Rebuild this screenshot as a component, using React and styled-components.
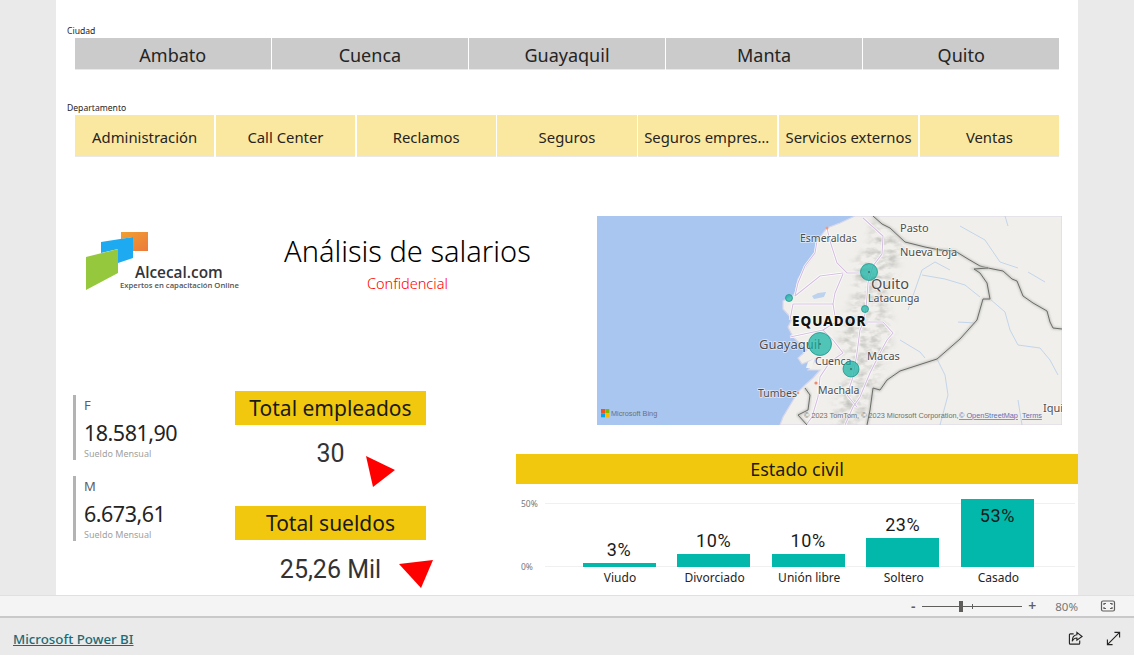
import React from 'react'
import styled, { createGlobalStyle } from 'styled-components'

const UI_FONT = `"Noto Sans", "Open Sans", "Liberation Sans", sans-serif`
const NUM_FONT = `Roboto, "Liberation Sans", sans-serif`

const GlobalStyle = createGlobalStyle`
  html, body {
    margin: 0;
    height: 655px;
    overflow: hidden;
    background: #eaeaea;
    font-family: ${UI_FONT};
  }
`

const Page = styled.div`
  width: 1134px;
  height: 655px;
  display: flex;
  flex-direction: column;
`

const Canvas = styled.main`
  width: 1022px;
  height: 595px;
  margin-left: 56px;
  background: #fff;
  padding-top: 25px;
  box-sizing: border-box;
  overflow: hidden;
  flex: none;
`

const SlicerLabel = styled.div`
  margin-left: 11px;
  height: 13px;
  font-size: 8.6px;
  line-height: 12px;
  color: #252423;
`

const SlicerRow = styled.div`
  display: grid;
  grid-template-columns: repeat(${props => props.$count}, minmax(0, 1fr));
  gap: 1.5px;
  margin: 0 19px 32px;
`

const Tile = styled.div`
  height: ${props => props.$height}px;
  line-height: ${props => props.$height + 2}px;
  background: ${props => props.$color};
  border-bottom: 1px solid #e9e9e9;
  box-sizing: border-box;
  padding: 0 6px;
  text-align: center;
  font-size: ${props => props.$size}px;
  color: #252423;
  white-space: nowrap;
  overflow: hidden;
  text-overflow: ellipsis;
`

const Lower = styled.div`
  display: grid;
  grid-template-columns: 460px 562px;
  margin-top: 59px;
`

const LeftColumn = styled.div`
  display: flex;
  flex-direction: column;
`

const BrandRow = styled.div`
  height: 175px;
  display: flex;
  align-items: flex-start;
`

const Logo = styled.svg`
  width: 160px;
  height: 70px;
  margin: 12px 0 0 26px;
  flex: none;
`

const LogoName = styled.text`
  font-family: "Open Sans", ${UI_FONT};
  font-size: 15.4px;
  font-weight: 600;
  fill: #33353a;
`

const LogoTag = styled.text`
  font-family: "Open Sans", ${UI_FONT};
  font-size: 7.7px;
  font-weight: 600;
  fill: #555;
`

const TitleBlock = styled.div`
  width: 270px;
  margin: 15px 0 0 42px;
  text-align: center;
`

const Title = styled.h1`
  margin: 0;
  font-size: 29px;
  line-height: 40px;
  font-weight: 300;
  color: #000;
  white-space: nowrap;
`

const Subtitle = styled.div`
  margin-top: 2px;
  font-size: 14.5px;
  font-weight: 300;
  line-height: 20px;
  color: #f00;
`

const StatsRow = styled.div`
  display: flex;
`

const CardColumn = styled.div`
  width: 179px;
  padding: 4px 0 0 17px;
  box-sizing: border-box;
  display: flex;
  flex-direction: column;
  gap: 16px;
`

const StatCard = styled.div`
  height: 65px;
  box-sizing: border-box;
  border-left: 3px solid #b3b3b3;
  padding-left: 8px;
`

const StatKey = styled.div`
  font-size: 13px;
  line-height: 20px;
  color: #605e5c;
`

const StatValue = styled.div`
  margin-top: 4px;
  font-size: 21.5px;
  line-height: 28px;
  letter-spacing: -0.5px;
  color: #252423;
`

const StatCaption = styled.div`
  margin-top: 1px;
  font-size: 9px;
  line-height: 12px;
  color: #a19f9d;
`

const KpiColumn = styled.div`
  width: 191px;
`

const Band = styled.div`
  height: ${props => props.$height}px;
  line-height: ${props => props.$height}px;
  background: #f2c80f;
  text-align: center;
  font-size: ${props => props.$size}px;
  color: #1a1a1a;
`

const KpiValue = styled.div`
  position: relative;
  height: 81px;
  padding-top: ${props => props.$top}px;
  box-sizing: border-box;
  text-align: center;
  font-family: ${NUM_FONT};
  font-size: 25px;
  line-height: 30px;
  color: #333;
`

const Arrow = styled.svg`
  position: absolute;
  left: ${props => props.$left}px;
  top: ${props => props.$top}px;
  width: 36px;
  height: 32px;
`

const RightColumn = styled.div`
  display: flex;
  flex-direction: column;
`

const MapFrame = styled.svg`
  display: block;
  width: 465px;
  height: 209px;
  margin-left: 81px;
`

const Place = styled.text`
  font-family: ${UI_FONT};
  font-size: ${props => props.$size}px;
  font-weight: ${props => (props.$bold ? 800 : 400)};
  letter-spacing: ${props => (props.$bold ? 1 : 0)}px;
  fill: ${props => (props.$bold ? '#111' : '#4e4e4e')};
  paint-order: stroke;
  stroke: ${props => (props.$bold ? 'rgba(255,255,255,.7)' : 'rgba(255,255,255,.6)')};
  stroke-width: 1.6px;
`

const Attribution = styled.text`
  font-family: "Liberation Sans", sans-serif;
  font-size: 7.3px;
  fill: ${props => (props.$link ? '#5a72b8' : '#6f6f6f')};
  text-decoration: ${props => (props.$link ? 'underline' : 'none')};
`

const ChartBox = styled.section`
  margin-top: 29px;
`

const Plot = styled.div`
  position: relative;
  height: 111px;
`

const GridLine = styled.div`
  position: absolute;
  left: 29px;
  right: 3px;
  top: ${props => props.$top}px;
  height: 1px;
  background: #f0f0f0;
`

const AxisTick = styled.span`
  position: absolute;
  left: 5px;
  top: ${props => props.$top}px;
  font-size: 8.5px;
  line-height: 12px;
  color: #777;
`

const Bars = styled.div`
  position: relative;
  display: grid;
  grid-template-columns: repeat(5, 73px);
  column-gap: 21.6px;
  margin-left: 66.5px;
`

const BarSlot = styled.div`
  height: 83px;
  display: flex;
  flex-direction: column;
  justify-content: flex-end;
  align-items: center;
  position: relative;
`

const BarValue = styled.div`
  margin-bottom: 2px;
  font-family: ${NUM_FONT};
  font-size: 18px;
  line-height: 22px;
  letter-spacing: 0.6px;
  color: #1a1a1a;
  ${props => props.$inside && `
    position: absolute;
    top: 21px;
    z-index: 1;
  `}
`

const Bar = styled.div`
  width: 100%;
  background: #01b8aa;
`

const BarName = styled.div`
  margin-top: 2px;
  padding-left: 2px;
  font-size: 12px;
  line-height: 18px;
  text-align: center;
  color: #252423;
  white-space: nowrap;
`

const StatusBar = styled.div`
  height: 23px;
  box-sizing: border-box;
  border-top: 1px solid #e0e0e0;
  border-bottom: 2px solid #c9c9c9;
  background: #f4f4f4;
  display: flex;
  align-items: center;
  justify-content: flex-end;
  color: #605e5c;
`

const ZoomSign = styled.span`
  width: 10px;
  font-size: 14px;
  font-weight: 600;
  line-height: 14px;
  text-align: center;
`

const Slider = styled.div`
  position: relative;
  width: 100px;
  height: 1px;
  margin: 0 5px 0 4px;
  background: #605e5c;
`

const SliderTick = styled.i`
  position: absolute;
  left: 50px;
  top: -2px;
  width: 1px;
  height: 5px;
  background: #605e5c;
`

const SliderThumb = styled.i`
  position: absolute;
  left: 37px;
  top: -5px;
  width: 4px;
  height: 11px;
  background: #605e5c;
`

const ZoomValue = styled.span`
  margin: 0 22px 0 18px;
  font-size: 11.5px;
  color: #767676;
`

const Footer = styled.footer`
  flex: 1;
  display: flex;
  align-items: center;
  padding: 4px 13px 0;
`

const BrandLink = styled.a`
  font-size: 13.3px;
  font-weight: 500;
  color: #1b6b75;
  text-decoration: underline;
`

const FooterIcons = styled.div`
  margin-left: auto;
  display: flex;
  align-items: center;
  gap: 23px;
`

const Icon = styled.svg`
  display: block;
  width: ${props => props.$size}px;
  height: ${props => props.$size}px;
  margin-right: ${props => props.$right || 0}px;
  fill: none;
  stroke: ${props => props.$color || '#252423'};
  stroke-width: 1.2;
`

const cities = ['Ambato', 'Cuenca', 'Guayaquil', 'Manta', 'Quito']
const departments = ['Administración', 'Call Center', 'Reclamos', 'Seguros', 'Seguros empresariales', 'Servicios externos', 'Ventas']
const civil = [
  { name: 'Viudo', value: 3 },
  { name: 'Divorciado', value: 10 },
  { name: 'Unión libre', value: 10 },
  { name: 'Soltero', value: 23 },
  { name: 'Casado', value: 53 },
]

const land = 'M855 216L840 223L827 228L817 241L815 254L805 268L798 279L795 294L783 301L783 309L792 319L788 327L793 337L807 350L798 358L802 364L817 358L808 370L820 370L813 378L805 385L798 392L783 417L780 425L1062 425L1062 216Z'
const roads = [
  'M827 228L830 241L837 263L847 273L867 273',
  'M817 241L815 253L805 266L798 283L795 296',
  'M795 296L820 276L843 273',
  'M843 274L835 293L833 304L793 304L790 320',
  'M863 218L883 236L882 254L873 266L868 283L866 309L863 323L860 330L857 353L853 377L847 395L857 407',
  'M863 322L883 322L893 333L887 340L880 353L870 373L860 397L853 407L845 425',
  'M790 337L823 330L833 340L843 353L830 362L820 377L818 397L812 417L806 425',
  'M833 304L836 322L823 330',
]
const rivers = [
  'M950 270L935 262L922 270L915 290L908 310',
  'M922 275L945 279L965 285L980 297',
  'M990 299L1005 312L1010 330L1018 345L1040 348L1050 360L1058 375',
  'M937 359L945 375L948 395L940 425',
  'M1005 216L1008 226M960 226L985 240L1000 262L1018 268',
  'M1028 272L1045 282M958 322L975 323',
  'M900 340L920 352L925 358',
  'M1018 400L1022 425',
]
const colombiaBorder = 'M873 216L882 224L890 228L905 242L925 247L940 250L955 251L968 259L980 266L988 268L1003 271L1012 279L1017 281L1023 296L1033 303L1047 311L1050 322L1053 328L1062 329'
const peruBorder = 'M988 268L974 269L980 273L987 283L990 299L983 299L977 320L960 339L937 359L900 371L887 380L880 390L873 388L870 410L867 425'
const peruCoastBorder = 'M805 388L810 395L808 410L798 415L807 425'
const bubbles = [
  { x: 869, y: 272, r: 8.5 },
  { x: 789, y: 298, r: 3.5 },
  { x: 865, y: 309, r: 3.5 },
  { x: 820, y: 344, r: 11.5 },
  { x: 851, y: 369, r: 8 },
]
const places = [
  { name: 'Esmeraldas', x: 800, y: 242, size: 10.5 },
  { name: 'Pasto', x: 900, y: 232, size: 11 },
  { name: 'Nueva Loja', x: 900, y: 256, size: 11 },
  { name: 'Quito', x: 871, y: 289, size: 14.5 },
  { name: 'Latacunga', x: 868, y: 302, size: 10.5 },
  { name: 'Guayaquil', x: 759, y: 349, size: 13 },
  { name: 'Cuenca', x: 815, y: 365, size: 10.5 },
  { name: 'Macas', x: 867, y: 360, size: 11 },
  { name: 'Machala', x: 818, y: 394, size: 10.5 },
  { name: 'Tumbes', x: 758, y: 397, size: 10.5 },
  { name: 'Iqui', x: 1043, y: 412, size: 11 },
]

function EcuadorMap() {
  return (
    <MapFrame viewBox="597 216 465 209">
      <defs>
        <filter id="ridge" x="-10%" y="-10%" width="120%" height="120%" colorInterpolationFilters="sRGB">
          <feGaussianBlur in="SourceAlpha" stdDeviation="5" result="mask" />
          <feTurbulence type="fractalNoise" baseFrequency="0.09 0.16" numOctaves="3" seed="4" />
          <feColorMatrix values="0 0 0 0 .68  0 0 0 0 .68  0 0 0 0 .66  1.5 0 0 0 -.58" />
          <feComposite in2="mask" operator="in" />
          <feGaussianBlur stdDeviation="0.5" />
        </filter>
        <filter id="soft"><feGaussianBlur stdDeviation="1.2" /></filter>
      </defs>
      <rect x="597" y="216" width="465" height="209" fill="#a9c6f1" />
      <path d={land} fill="#f0efeb" />
      <path d={land} fill="none" stroke="#d9d6e8" strokeWidth="1.2" />
      <path d="M808 362L815 358L812 368L806 368Z" fill="#f4f3f0" />
      <path d="M812 296L818 293L826 292L824 297L814 299Z" fill="#bcd2ee" />
      <path
        d="M870 216L905 245L897 262L886 300L892 335L880 375L868 405L860 425L832 425L838 392L850 362L838 342L845 318L855 296L855 262L872 240Z"
        fill="#fff"
        filter="url(#ridge)"
      />
      {rivers.map(d => <path key={d} d={d} fill="none" stroke="#bdd1ea" strokeWidth="0.9" />)}
      {roads.map(d => <path key={d} d={d} fill="none" stroke="#fff" strokeWidth="2.4" />)}
      {roads.map(d => <path key={d} d={d} fill="none" stroke="#d5bfe0" strokeWidth="1.1" />)}
      {[colombiaBorder, peruBorder, peruCoastBorder].map(d => (
        <g key={d} fill="none">
          <path d={d} stroke="#c4c4c0" strokeWidth="2.6" filter="url(#soft)" />
          <path d={d} stroke="#6c6c6a" strokeWidth="1" />
        </g>
      ))}
      <circle cx="827" cy="228" r="1.5" fill="#ef9a80" />
      <circle cx="816" cy="383" r="1.6" fill="#ef8a70" />
      <circle cx="798" cy="393" r="1.2" fill="#ef9a80" />
      {places.map(p => <Place key={p.name} x={p.x} y={p.y} $size={p.size}>{p.name}</Place>)}
      <Place x="792" y="326" $size={13.5} $bold>EQUADOR</Place>
      {bubbles.map(b => (
        <g key={b.x}>
          <circle cx={b.x} cy={b.y} r={b.r} fill="#14b3a4" fillOpacity=".72" stroke="#0e9184" strokeWidth=".7" />
          {b.r > 5 && <circle cx={b.x} cy={b.y} r="1" fill="#3f6f69" />}
        </g>
      ))}
      <rect x="601" y="409" width="4" height="4" fill="#f25022" />
      <rect x="605.3" y="409" width="4" height="4" fill="#7fba00" />
      <rect x="601" y="413.3" width="4" height="4" fill="#00a4ef" />
      <rect x="605.3" y="413.3" width="4" height="4" fill="#ffb900" />
      <Attribution x="611" y="416">Microsoft Bing</Attribution>
      <Attribution x="804" y="418">© 2023 TomTom, © 2023 Microsoft Corporation,</Attribution>
      <Attribution x="959" y="418" $link>© OpenStreetMap</Attribution>
      <Attribution x="1022" y="418" $link>Terms</Attribution>
    </MapFrame>
  )
}

function BrandLogo() {
  return (
    <Logo viewBox="82 228 160 70">
      <defs>
        <linearGradient id="orange" x1="0" y1="0" x2="1" y2="1">
          <stop offset="0" stopColor="#f0a030" />
          <stop offset="1" stopColor="#ec7a3c" />
        </linearGradient>
      </defs>
      <path d="M121 232H148V251L133 251V237L121 239Z" fill="url(#orange)" />
      <path d="M101 242L133 237V258L118 263V249L101 253Z" fill="#1eaaf1" />
      <path d="M86 257L118 249V273L86 290Z" fill="#95c83d" />
      <LogoName x="135" y="278">Alcecal.com</LogoName>
      <LogoTag x="120" y="288">Expertos en capacitación Online</LogoTag>
    </Logo>
  )
}

function Stat({ label, value }) {
  return (
    <StatCard>
      <StatKey>{label}</StatKey>
      <StatValue>{value}</StatValue>
      <StatCaption>Sueldo Mensual</StatCaption>
    </StatCard>
  )
}

function CivilChart() {
  return (
    <ChartBox>
      <Band $height={30} $size={18}>Estado civil</Band>
      <Plot>
        <GridLine $top={19} />
        <GridLine $top={82} />
        <AxisTick $top={14}>50%</AxisTick>
        <AxisTick $top={77}>0%</AxisTick>
        <Bars>
          {civil.map(item => (
            <div key={item.name}>
              <BarSlot>
                <BarValue $inside={item.value > 50}>{item.value}%</BarValue>
                <Bar style={{ height: item.value * 1.28 }} />
              </BarSlot>
              <BarName>{item.name}</BarName>
            </div>
          ))}
        </Bars>
      </Plot>
    </ChartBox>
  )
}

export default function App() {
  return (
    <Page>
      <GlobalStyle />
      <Canvas>
        <SlicerLabel>Ciudad</SlicerLabel>
        <SlicerRow $count={cities.length}>
          {cities.map(c => <Tile key={c} $height={32} $size={18} $color="#cbcbcb">{c}</Tile>)}
        </SlicerRow>
        <SlicerLabel>Departamento</SlicerLabel>
        <SlicerRow $count={departments.length}>
          {departments.map(d => <Tile key={d} $height={42} $size={14.85} $color="#fbe8a0">{d}</Tile>)}
        </SlicerRow>
        <Lower>
          <LeftColumn>
            <BrandRow>
              <BrandLogo />
              <TitleBlock>
                <Title>Análisis de salarios</Title>
                <Subtitle>Confidencial</Subtitle>
              </TitleBlock>
            </BrandRow>
            <StatsRow>
              <CardColumn>
                <Stat label="F" value="18.581,90" />
                <Stat label="M" value="6.673,61" />
              </CardColumn>
              <KpiColumn>
                <Band $height={34} $size={21}>Total empleados</Band>
                <KpiValue $top={14}>
                  30
                  <Arrow $left={130} $top={30} viewBox="0 0 36 32"><path d="M1 1L30 15L8 32Z" fill="#f00" /></Arrow>
                </KpiValue>
                <Band $height={34} $size={21}>Total sueldos</Band>
                <KpiValue $top={15}>
                  25,26 Mil
                  <Arrow $left={164} $top={19} viewBox="0 0 36 32"><path d="M0 5L34 1L22 29Z" fill="#f00" /></Arrow>
                </KpiValue>
              </KpiColumn>
            </StatsRow>
          </LeftColumn>
          <RightColumn>
            <EcuadorMap />
            <CivilChart />
          </RightColumn>
        </Lower>
      </Canvas>
      <StatusBar>
        <ZoomSign>-</ZoomSign>
        <Slider>
          <SliderTick />
          <SliderThumb />
        </Slider>
        <ZoomSign>+</ZoomSign>
        <ZoomValue>80%</ZoomValue>
        <Icon $size={16} $right={18} $color="#605e5c" viewBox="0 0 16 16">
          <rect x="1.5" y="3" width="13" height="10" rx="1.5" />
          <path d="M4 7V5.5H6M10 5.5H12V7M12 9V10.5H10M6 10.5H4V9" />
        </Icon>
      </StatusBar>
      <Footer>
        <BrandLink href="#">Microsoft Power BI</BrandLink>
        <FooterIcons>
          <Icon $size={15} viewBox="0 0 16 16">
            <path d="M6 3H2.500A1 1 0 0 0 1.500 4V13A1 1 0 0 0 2.500 14H11.500A1 1 0 0 0 12.500 13V10" />
            <path d="M9.500 1.500L15 5.800L9.500 9.800V7.500C7 7.500 5.500 8.500 4.500 11C4.500 7 6.500 4.300 9.500 4Z" />
          </Icon>
          <Icon $size={15} viewBox="0 0 16 16">
            <path d="M1.500 14.500L14.500 1.500M9 1.500H14.500V7M1.500 9V14.500H7" />
          </Icon>
        </FooterIcons>
      </Footer>
    </Page>
  )
}
